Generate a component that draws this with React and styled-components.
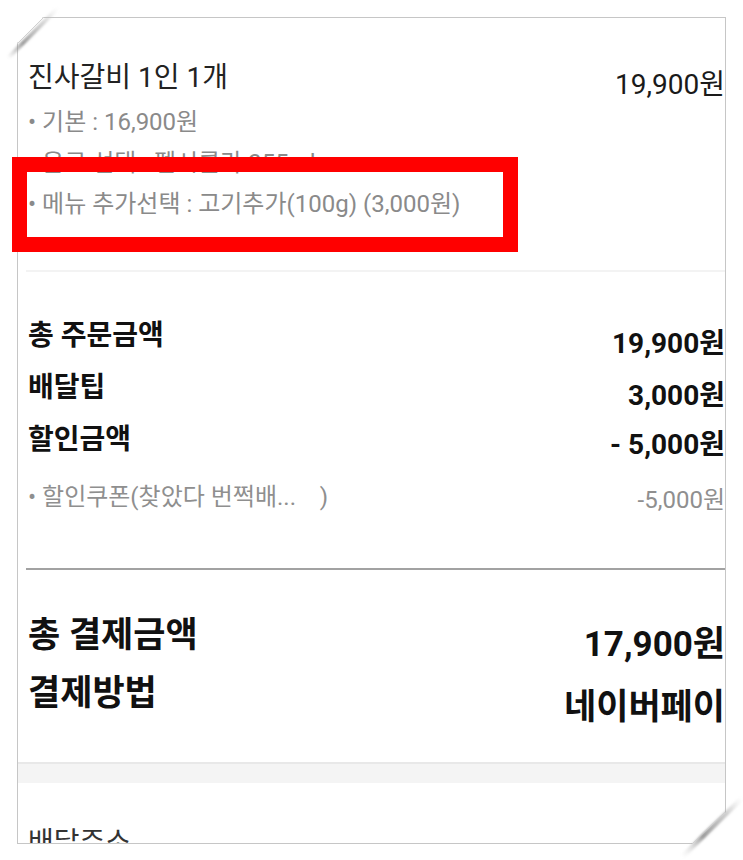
import styled, { createGlobalStyle } from "styled-components";

const GlobalStyle = createGlobalStyle`
  html, body {
    margin: 0;
    padding: 0;
    background: #ffffff;
  }
  body {
    font-family: Roboto, "Noto Sans CJK KR", "Noto Sans", sans-serif;
    color: #222222;
  }
  * {
    box-sizing: border-box;
  }
`;

const options = [
  "• 기본 : 16,900원",
  "• 음료 선택 : 펩시콜라 355ml",
  "• 메뉴 추가선택 : 고기추가(100g) (3,000원)",
];

const totals = [
  { label: "총 주문금액", value: "19,900원", shift: 8 },
  { label: "배달팁", value: "3,000원", shift: 8 },
  { label: "할인금액", value: "- 5,000원", shift: 5 },
];

export default function App() {
  return (
    <Page>
      <GlobalStyle />
      <Card>
        <Content>
          <MenuSection>
            <Row height={40}>
              <ItemTitle>진사갈비 1인 1개</ItemTitle>
              <ItemPrice>19,900원</ItemPrice>
            </Row>
            <OptionList>
              {options.map((text) => (
                <Option key={text}>{text}</Option>
              ))}
            </OptionList>
          </MenuSection>
          <ThinLine />
          <TotalsSection>
            {totals.map(({ label, value, shift }) => (
              <Row key={label} height={52}>
                <TotalLabel>{label}</TotalLabel>
                <TotalValue shift={shift}>{value}</TotalValue>
              </Row>
            ))}
            <CouponRow height={42}>
              <CouponText>• 할인쿠폰(찾았다 번쩍배...&nbsp;&nbsp;&nbsp;&nbsp;)</CouponText>
              <CouponText shift={3}>-5,000원</CouponText>
            </CouponRow>
          </TotalsSection>
          <BoldLine />
          <PaySection>
            <Row height={58}>
              <PayLabel>총 결제금액</PayLabel>
              <PayValue shift={9}>17,900원</PayValue>
            </Row>
            <Row height={58}>
              <PayLabel>결제방법</PayLabel>
              <PayValue shift={14}>네이버페이</PayValue>
            </Row>
          </PaySection>
        </Content>
        <GrayBand />
        <AddressSection>
          <AddressTitle>배달주소</AddressTitle>
        </AddressSection>
      </Card>

      <TopFold width="70" height="70" viewBox="0 0 70 70">
        <defs>
          <linearGradient id="foldA" x1="0" y1="1" x2="1" y2="0">
            <stop offset="0" stopColor="#9a9a9a" stopOpacity="0" />
            <stop offset="0.3" stopColor="#8c8c8c" stopOpacity="0.85" />
            <stop offset="0.7" stopColor="#b0b0b0" stopOpacity="0.55" />
            <stop offset="1" stopColor="#cfcfcf" stopOpacity="0" />
          </linearGradient>
          <filter id="blurA">
            <feGaussianBlur stdDeviation="0.9" />
          </filter>
        </defs>
        <polygon points="15,15 45,15 15,45" fill="#ffffff" />
        <line x1="8" y1="58" x2="58" y2="8" stroke="url(#foldA)" strokeWidth="4" filter="url(#blurA)" />
        <line x1="17" y1="44" x2="44" y2="17" stroke="#d0d0d0" strokeWidth="1" />
      </TopFold>

      <BottomFold width="73" height="70" viewBox="0 0 73 70">
        <defs>
          <linearGradient id="foldB" x1="0" y1="1" x2="1" y2="0">
            <stop offset="0" stopColor="#d0d0d0" stopOpacity="0" />
            <stop offset="0.35" stopColor="#8a8a8a" stopOpacity="0.85" />
            <stop offset="0.75" stopColor="#a8a8a8" stopOpacity="0.55" />
            <stop offset="1" stopColor="#d0d0d0" stopOpacity="0" />
          </linearGradient>
          <filter id="blurB">
            <feGaussianBlur stdDeviation="1" />
          </filter>
        </defs>
        <polygon points="57,21 57,55 21,55" fill="#ffffff" />
        <line x1="12" y1="67" x2="72" y2="8" stroke="url(#foldB)" strokeWidth="5" filter="url(#blurB)" />
        <line x1="55" y1="22" x2="23" y2="53" stroke="#d0d0d0" strokeWidth="1" />
      </BottomFold>

      <Highlight />
    </Page>
  );
}

const Page = styled.div`
  position: relative;
  width: 743px;
  height: 860px;
  padding: 17px 0 0 17px;
  overflow: hidden;
  background: #ffffff;
`;

const Card = styled.section`
  width: 709px;
  height: 827px;
  border: 1px solid #c6c6c6;
  background: #ffffff;
  overflow: hidden;
  display: flex;
  flex-direction: column;
`;

const Content = styled.div`
  padding-left: 10px;
`;

const Row = styled.div`
  display: flex;
  justify-content: space-between;
  align-items: flex-start;
  height: ${(props) => props.height}px;
  white-space: nowrap;
`;

const MenuSection = styled.div`
  padding: 40px 0 45px;
`;

const ItemTitle = styled.div`
  font-size: 28px;
  line-height: 40px;
  color: #222222;
`;

const ItemPrice = styled.div`
  font-size: 28px;
  line-height: 40px;
  padding-top: 7px;
  color: #1a1a1a;
`;

const OptionList = styled.div`
  margin-top: 4px;
`;

const Option = styled.div`
  font-size: 24px;
  line-height: 41px;
  color: #8a8a8a;
  white-space: nowrap;
`;

const ThinLine = styled.div`
  height: 2px;
  margin-left: -2px;
  background: #f3f3f3;
`;

const TotalsSection = styled.div`
  padding: 38px 0 50px;
`;

const TotalLabel = styled.div`
  font-size: 28px;
  font-weight: 700;
  line-height: 52px;
  color: #111111;
`;

const TotalValue = styled.div`
  font-size: 28px;
  font-weight: 700;
  line-height: 52px;
  padding-top: ${(props) => props.shift || 0}px;
  color: #111111;
`;

const CouponRow = styled(Row)`
  margin-top: 10px;
`;

const CouponText = styled.div`
  font-size: 24px;
  line-height: 42px;
  padding-top: ${(props) => props.shift || 0}px;
  color: #8f8f8f;
`;

const BoldLine = styled.div`
  height: 2px;
  margin-left: -2px;
  background: #a2a2a2;
`;

const PaySection = styled.div`
  padding: 37px 0 39px;
`;

const PayLabel = styled.div`
  font-size: 35px;
  font-weight: 700;
  line-height: 58px;
  color: #111111;
`;

const PayValue = styled.div`
  font-size: 35px;
  font-weight: 700;
  line-height: 58px;
  padding-top: ${(props) => props.shift || 0}px;
  color: #111111;
`;

const GrayBand = styled.div`
  height: 21px;
  flex-shrink: 0;
  border-top: 2px solid #e8e8e8;
  background: #f4f4f4;
`;

const AddressSection = styled.div`
  padding: 42px 0 0 10px;
`;

const AddressTitle = styled.div`
  font-size: 28px;
  line-height: 36px;
  color: #333333;
`;

const TopFold = styled.svg`
  position: absolute;
  left: 0;
  top: 0;
`;

const BottomFold = styled.svg`
  position: absolute;
  left: 670px;
  top: 790px;
`;

const Highlight = styled.div`
  position: absolute;
  left: 12px;
  top: 157px;
  width: 506px;
  height: 95px;
  border: 15px solid #ff0000;
  pointer-events: none;
`;
